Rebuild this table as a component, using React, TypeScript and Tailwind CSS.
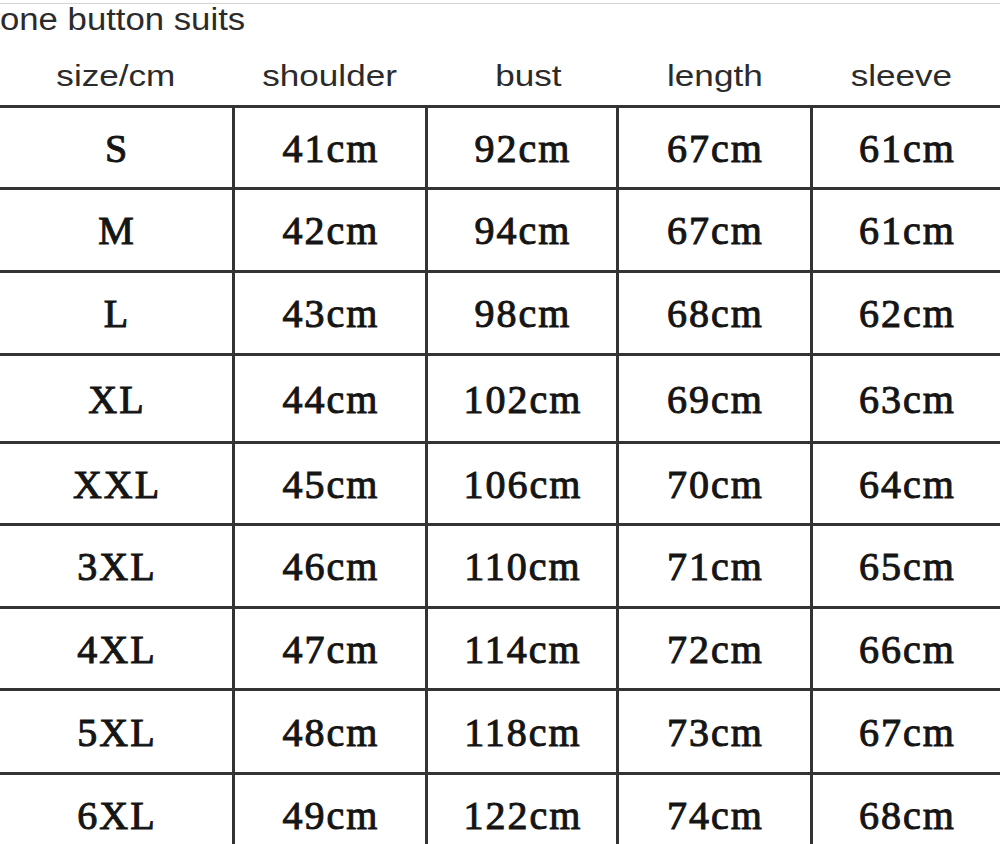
import React from "react";

const cols = ["size/cm", "shoulder", "bust", "length", "sleeve"];
const rows: string[][] = [
  ["S", "41cm", "92cm", "67cm", "61cm"],
  ["M", "42cm", "94cm", "67cm", "61cm"],
  ["L", "43cm", "98cm", "68cm", "62cm"],
  ["XL", "44cm", "102cm", "69cm", "63cm"],
  ["XXL", "45cm", "106cm", "70cm", "64cm"],
  ["3XL", "46cm", "110cm", "71cm", "65cm"],
  ["4XL", "47cm", "114cm", "72cm", "66cm"],
  ["5XL", "48cm", "118cm", "73cm", "67cm"],
  ["6XL", "49cm", "122cm", "74cm", "68cm"],
];
const rowHeights = [79, 80, 80, 85, 79, 80, 79, 81, 80];
const headerPad = ["", "", "pl-[13px]", "", "pr-[10px]"];

export default function App() {
  return (
    <div
      className="w-[1000px] h-[844px] overflow-hidden bg-white"
      style={{ fontFamily: '"Liberation Sans", Arial, sans-serif' }}
    >
      <div className="h-[3px]" />
      <div className="h-px bg-[#d4d4d4]" />
      <div className="h-[31px] text-[31px] leading-[31px] text-[#2b2b2b] whitespace-nowrap">
        <span className="inline-block origin-left scale-x-[1.12]">one button suits</span>
      </div>
      <div className="grid grid-cols-[232px_190px_188px_191px_187px] gap-x-[3px] h-[70px] pt-[26px]">
        {cols.map((c, i) => (
          <div
            key={c}
            className={`flex justify-center text-[30px] leading-[30px] text-[#2b2b2b] whitespace-nowrap ${headerPad[i]}`}
          >
            <span className="inline-block scale-x-[1.17]">{c}</span>
          </div>
        ))}
      </div>
      <div
        className="grid grid-cols-[232px_190px_188px_191px_187px] gap-[3px] bg-[#333333] pt-[3px]"
        style={{ fontFamily: '"Liberation Serif", "Times New Roman", serif' }}
      >
        {rows.map((r, ri) =>
          r.map((v, ci) => (
            <div
              key={`${ri}-${ci}`}
              className="bg-white flex items-center justify-center pt-[2px] pl-[2px] text-[40px] leading-[40px] tracking-[2px] text-[#151515] [-webkit-text-stroke:1px_#151515]"
              style={{ height: rowHeights[ri] }}
            >
              {v}
            </div>
          ))
        )}
      </div>
    </div>
  );
}
